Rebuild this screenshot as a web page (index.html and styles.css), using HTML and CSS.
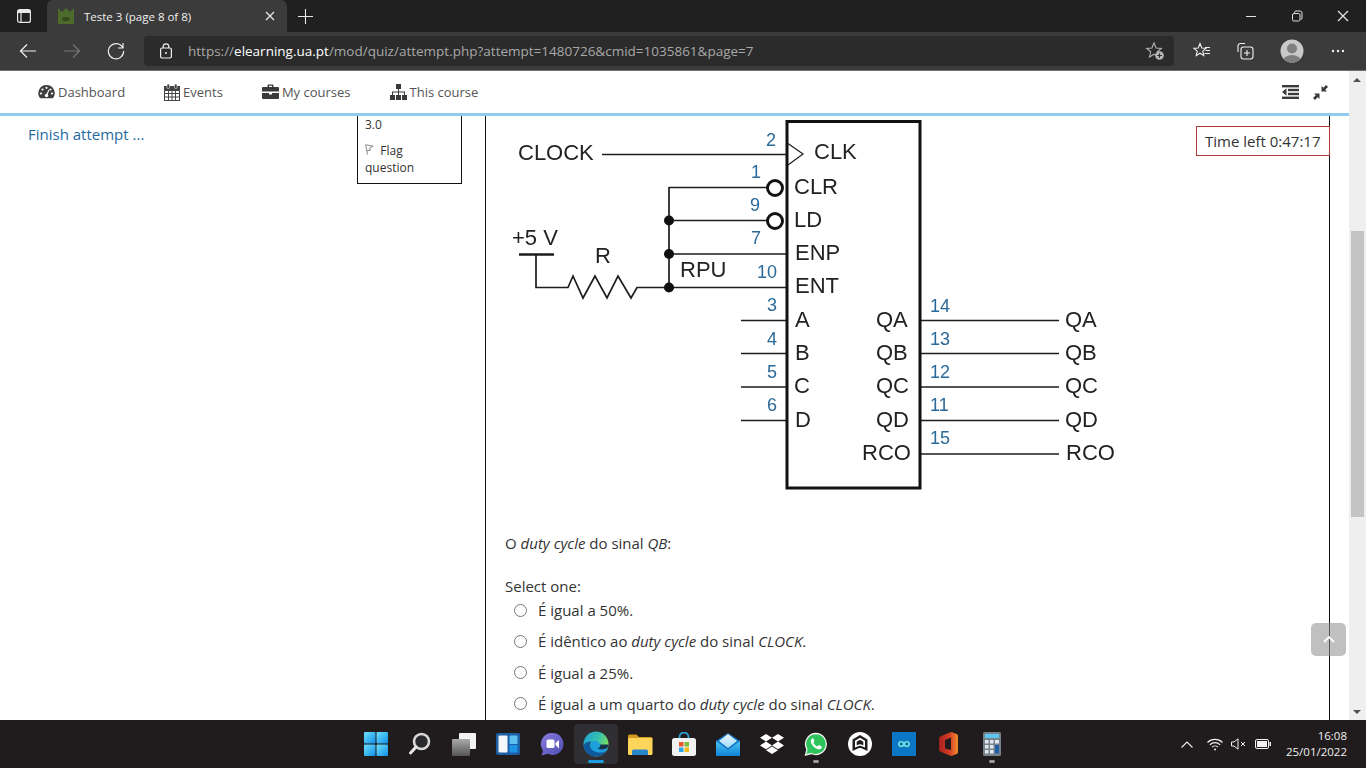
FILE: index.html
```html
<!DOCTYPE html>
<html lang="en">
<head>
<meta charset="utf-8">
<title>Teste 3 (page 8 of 8)</title>
<link rel="stylesheet" href="styles.css">
</head>
<body>
<div class="browser">
  <div class="tabstrip">
    <div class="tabside"><svg width="16" height="16" viewBox="0 0 16 16" fill="none" stroke="#e8e8e8" stroke-width="1.2"><rect x="1.6" y="1.6" width="12.8" height="12.8" rx="2"/><path d="M5 1.6v12.8M1.6 4.4h12.8" /><rect x="2" y="2" width="12" height="2.4" fill="#e8e8e8" stroke="none"/></svg></div>
    <div class="tab">
      <svg class="favicon" width="16" height="16" viewBox="0 0 16 16"><path d="M0 0l4 4 4-4 4 4 4-4v16H0z" fill="#4d6b2a"/><ellipse cx="8" cy="11" rx="4" ry="2" fill="#37491f"/></svg>
      <span class="tabtitle">Teste 3 (page 8 of 8)</span>
      <svg width="10" height="10" viewBox="0 0 10 10" stroke="#e8e8e8" stroke-width="1.3"><path d="M1 1l8 8M9 1l-8 8"/></svg>
    </div>
    <div class="newtab"><svg width="15" height="15" viewBox="0 0 15 15" stroke="#e8e8e8" stroke-width="1.1"><path d="M7.5 0v15M0 7.5h15"/></svg></div>
    <div class="winbtns">
      <svg width="46" height="32" viewBox="0 0 46 32" stroke="#e0e0e0" stroke-width="1"><path d="M18 16.5h10"/></svg>
      <svg width="46" height="32" viewBox="0 0 46 32" fill="none" stroke="#e0e0e0" stroke-width="1"><rect x="18.5" y="13.5" width="7.5" height="7.5" rx="1.5"/><path d="M20.5 13v-.5a1.5 1.5 0 0 1 1.5-1.5h4a2 2 0 0 1 2 2v5a1.5 1.5 0 0 1-1.5 1.5"/></svg>
      <svg width="46" height="32" viewBox="0 0 46 32" stroke="#e8e8e8" stroke-width="1.2"><path d="M18 11l10 10M28 11l-10 10"/></svg>
    </div>
  </div>
  <div class="toolbar">
    <div class="navbtn"><svg width="18" height="16" viewBox="0 0 18 16" fill="none" stroke="#f0f0f0" stroke-width="1.2"><path d="M17 8H1.5M8 1.5L1.5 8 8 14.5"/></svg></div>
    <div class="navbtn"><svg width="18" height="16" viewBox="0 0 18 16" fill="none" stroke="#777" stroke-width="1.2"><path d="M1 8h15.5M10 1.5L16.5 8 10 14.5"/></svg></div>
    <div class="navbtn"><svg width="18" height="18" viewBox="0 0 18 18" fill="none" stroke="#f0f0f0" stroke-width="1.2"><path d="M15.6 5.5A7.6 7.6 0 1 0 16.6 9M16 1v5h-5"/></svg></div>
    <div class="addressbar">
      <svg width="14" height="16" viewBox="0 0 14 16" fill="none" stroke="#f0f0f0" stroke-width="1.2"><rect x="1.6" y="5" width="10.8" height="10" rx="1.5"/><path d="M4.2 5V3.6a2.8 2.8 0 0 1 5.6 0V5"/><circle cx="7" cy="10" r="1" fill="#f0f0f0" stroke="none"/></svg>
      <span class="url"><span class="urlmute">https://</span><b class="urlhost">elearning.ua.pt</b><span class="urlmute">/mod/quiz/attempt.php?attempt=1480726&amp;cmid=1035861&amp;page=7</span></span>
      <svg class="addfav" width="20" height="20" viewBox="0 0 20 20"><path d="M9 2l2.1 5 5.2.4-4 3.4 1.2 5.2L9 13.2 4.500 16l1.200-5.200-4-3.400 5.200-.4z" fill="none" stroke="#b0b0b0" stroke-width="1.1"/><circle cx="14.500" cy="14.500" r="4.300" fill="#b8b8b8"/><path d="M14.500 12.200v4.600M12.200 14.500h4.600" stroke="#2b2b2b" stroke-width="1.100"/></svg>
    </div>
    <div class="tools">
      <svg width="18" height="18" viewBox="0 0 18 18" fill="none" stroke="#f0f0f0" stroke-width="1.100"><path d="M7 1.500l1.800 4.500 4.200.3-3.200 2.800 1 4.400L7 11.200l-3.800 2.300 1-4.400L1 6.300l4.200-.3z"/><path d="M12 5.500h5M12.500 8.500h4.500M11.500 11.500h5.500"/></svg>
      <svg width="18" height="18" viewBox="0 0 18 18" fill="none" stroke="#f0f0f0" stroke-width="1.100"><path d="M2 10V4a2.500 2.500 0 0 1 2.500-2.500H9"/><rect x="5" y="5" width="12" height="12" rx="2.500"/><path d="M11 8v6M8 11h6"/></svg>
      <svg class="avatar" width="24" height="24" viewBox="0 0 24 24"><defs><clipPath id="av"><circle cx="12" cy="12" r="11.500"/></clipPath></defs><circle cx="12" cy="12" r="11.500" fill="#c9c9c9"/><g clip-path="url(#av)" fill="#7f7f7f"><circle cx="12" cy="9.500" r="5"/><ellipse cx="12" cy="22" rx="9" ry="6"/></g></svg>
      <svg width="14" height="4" viewBox="0 0 14 4" fill="#f0f0f0"><circle cx="2" cy="2" r="1.200"/><circle cx="7" cy="2" r="1.200"/><circle cx="12" cy="2" r="1.200"/></svg>
    </div>
  </div>
  <div class="viewport">
    <div class="page">
      <nav class="sitenav">
        <a class="navitem"><svg width="17" height="16" viewBox="0 0 17 16" fill="#3f3f3f"><path d="M8.500 1a8.200 8.200 0 0 0-7 12.500c.3.500.8.700 1.300.7h11.400c.5 0 1-.2 1.300-.7A8.200 8.200 0 0 0 8.500 1z"/><g fill="#fff"><circle cx="8.500" cy="3.800" r="1.100"/><circle cx="4.500" cy="5.500" r="1.100"/><circle cx="12.500" cy="5.500" r="1.100"/><circle cx="3" cy="9.500" r="1.100"/><circle cx="14" cy="9.500" r="1.100"/><circle cx="8.500" cy="11.500" r="1.700"/><path d="M8 11l2.600-5.500.8.400L9.200 11.600z"/></g></svg><span>Dashboard</span></a>
        <a class="navitem"><svg width="16" height="17" viewBox="0 0 16 17" fill="none" stroke="#444" stroke-width="1"><rect x=".5" y="2.500" width="15" height="14" fill="#fff"/><path d="M.5 6.500h15M.5 9.500h15M.5 13h15M4.500 6.500v10M8 6.500v10M11.500 6.500v10"/><rect x="0" y="2.500" width="16" height="4" fill="#444" stroke="none"/><rect x="3" y="0" width="2.500" height="4.500" rx="1" fill="#444" stroke="#fff" stroke-width=".5"/><rect x="10.500" y="0" width="2.500" height="4.500" rx="1" fill="#444" stroke="#fff" stroke-width=".5"/></svg><span>Events</span></a>
        <a class="navitem"><svg width="17" height="16" viewBox="0 0 17 16" fill="#3a3a3a"><path d="M5.500 3V1.500a1 1 0 0 1 1-1h4a1 1 0 0 1 1 1V3H16a1 1 0 0 1 1 1v3.500H0V4a1 1 0 0 1 1-1zM7 1.800V3h3V1.800z" fill-rule="evenodd"/><path d="M0 9h7v1.500h3V9h7v5a1 1 0 0 1-1 1H1a1 1 0 0 1-1-1z"/></svg><span>My courses</span></a>
        <a class="navitem"><svg width="17" height="16" viewBox="0 0 17 16" fill="#3a3a3a"><rect x="6" y="0" width="5" height="5"/><rect x="0" y="11" width="5" height="5"/><rect x="6" y="11" width="5" height="5"/><rect x="12" y="11" width="5" height="5"/><path d="M8 5h1v2.500h6V11h-1V8.500H9V11H8V8.500H3V11H2V7.500h6z"/></svg><span>This course</span></a>
        <div class="navright">
          <svg width="17" height="14" viewBox="0 0 17 14" fill="#3a3a3a"><rect x="0" y="0" width="17" height="2.400"/><rect x="6" y="3.800" width="11" height="2.400"/><rect x="6" y="7.800" width="11" height="2.400"/><rect x="0" y="11.600" width="17" height="2.400"/><path d="M4.500 3.200v7.600L0 7z"/></svg>
          <svg width="15" height="15" viewBox="0 0 15 15" fill="#3a3a3a"><path d="M8.500 6.500V1l1.800 1.800L13 0l2 2-2.800 2.700L14 6.500zM6.500 8.500V14l-1.800-1.800L2 15l-2-2 2.800-2.700L1 8.500z"/></svg>
        </div>
      </nav>
      <div class="content">
        <aside class="sidebar"><a class="finish">Finish attempt ...</a></aside>
        <div class="qinfo">
          <div class="grade">3.0</div>
          <div class="flag"><svg width="9" height="11" viewBox="0 0 9 11" fill="none" stroke="#888" stroke-width="1"><path d="M2.500 10.500L.7.800l7.500 1.300-3.500 2 .6 2.200-3.200.3"/></svg>&nbsp; Flag<br>question</div>
        </div>
        <main class="question">
          <svg class="diagram" width="640" height="390" viewBox="505 116 640 390">
            <g fill="none" stroke="#1d1d1d" stroke-width="1.700">
              <path d="M602 154.500H787M669 187.500H768M669 220.500H768M669 254H787M669 287.500H787M669 187V288"/>
              <path d="M519 254.500H554" stroke-width="2.500"/>
              <path d="M536 254V287.500H568L573 276 583 298 595 276 607 298 618 276 631 298 637 287.500H669"/>
              <path d="M741 320.500H787M741 353.500H787M741 387H787M741 420.500H787M920 320.500H1059M920 353.500H1059M920 387H1059M920 420.500H1059M920 454H1059"/>
              <rect x="787" y="121.500" width="133" height="366.500" stroke="#111" stroke-width="3"/>
              <path d="M788 143.500L803 154 788 165" stroke-width="1.200"/>
              <circle cx="775" cy="188" r="7.500" stroke="#111" stroke-width="2.900" fill="#fff"/>
              <circle cx="775" cy="221" r="7.500" stroke="#111" stroke-width="2.900" fill="#fff"/>
            </g>
            <g fill="#111"><circle cx="669" cy="220.500" r="5"/><circle cx="669" cy="254" r="5"/><circle cx="669" cy="287.500" r="5"/></g>
            <g class="dlabel">
              <text x="518" y="160">CLOCK</text><text x="512" y="245">+5 V</text><text x="595" y="263">R</text><text x="680" y="277">RPU</text>
              <text x="814" y="158.500">CLK</text><text x="794" y="193.500">CLR</text><text x="794" y="226.500">LD</text><text x="795" y="259.500">ENP</text><text x="795" y="293">ENT</text>
              <text x="795" y="326.500">A</text><text x="795" y="359.500">B</text><text x="794" y="393">C</text><text x="795" y="426.500">D</text>
              <text x="876" y="326.500">QA</text><text x="876" y="359.500">QB</text><text x="876" y="393">QC</text><text x="876" y="426.500">QD</text><text x="862" y="459.500">RCO</text>
              <text x="1065" y="326.500">QA</text><text x="1065" y="359.500">QB</text><text x="1065" y="393">QC</text><text x="1065" y="426.500">QD</text><text x="1066" y="459.500">RCO</text>
            </g>
            <g class="dnum">
              <text x="766" y="146">2</text><text x="751" y="178">1</text><text x="750" y="211">9</text><text x="751" y="244">7</text><text x="757" y="278">10</text>
              <text x="767" y="311">3</text><text x="767" y="345">4</text><text x="767" y="378">5</text><text x="767" y="411">6</text>
              <text x="930" y="312">14</text><text x="930" y="345">13</text><text x="930" y="378">12</text><text x="930" y="411">11</text><text x="930" y="444">15</text>
            </g>
          </svg>
          <p class="qtext">O <i>duty cycle</i> do sinal <i>QB</i>:</p>
          <p class="prompt">Select one:</p>
          <div class="answers">
            <label class="answer"><span class="radio"></span><span>É igual a 50%.</span></label>
            <label class="answer"><span class="radio"></span><span>É idêntico ao <i>duty cycle</i> do sinal <i>CLOCK</i>.</span></label>
            <label class="answer"><span class="radio"></span><span>É igual a 25%.</span></label>
            <label class="answer"><span class="radio"></span><span>É igual a um quarto do <i>duty cycle</i> do sinal <i>CLOCK</i>.</span></label>
          </div>
        </main>
      </div>
      <div class="timer">Time left 0:47:17</div>
      <div class="totop"><svg width="12" height="7" viewBox="0 0 12 7" fill="none" stroke="#fff" stroke-width="1.800"><path d="M1 6l5-5 5 5"/></svg></div>
    </div>
    <div class="scrollbar">
      <div class="arrow-up"></div>
      <div class="thumb"></div>
      <div class="arrow-down"></div>
    </div>
  </div>
  <footer class="taskbar">
    <div class="slot"><svg width="24" height="24" viewBox="0 0 24 24"><defs><linearGradient id="wg" x1="0" y1="0" x2="1" y2="1"><stop offset="0" stop-color="#6fe0fb"/><stop offset="1" stop-color="#0f8fe8"/></linearGradient></defs><g fill="url(#wg)"><rect x="0" y="0" width="11.500" height="11.500" rx="1"/><rect x="12.500" y="0" width="11.500" height="11.500" rx="1"/><rect x="0" y="12.500" width="11.500" height="11.500" rx="1"/><rect x="12.500" y="12.500" width="11.500" height="11.500" rx="1"/></g></svg></div>
    <div class="slot"><svg width="24" height="24" viewBox="0 0 24 24" fill="none"><circle cx="13.500" cy="9.500" r="7.500" stroke="#d8d8d8" stroke-width="2.600" fill="#2a2a2c"/><path d="M8 15l-5.500 6" stroke="#e8e8e8" stroke-width="3" stroke-linecap="round"/></svg></div>
    <div class="slot"><svg width="24" height="24" viewBox="0 0 24 24"><defs><linearGradient id="tv" x1="0" y1="0" x2="0" y2="1"><stop offset="0" stop-color="#aaa"/><stop offset="1" stop-color="#555"/></linearGradient></defs><rect x="7" y="1" width="17" height="16" rx="1" fill="#f2f2f2"/><rect x="0" y="7" width="18" height="17" rx="1" fill="url(#tv)"/></svg></div>
    <div class="slot"><svg width="24" height="22" viewBox="0 0 24 22"><rect width="24" height="22" rx="2" fill="#1d5fa6"/><rect x="2.500" y="2.500" width="9" height="17" rx="1" fill="#f4f8fc"/><rect x="13.500" y="2.500" width="8" height="8.500" rx="1" fill="#5ec1f2"/><rect x="13.500" y="12" width="8" height="7.500" rx="1" fill="#1f94e6"/></svg></div>
    <div class="slot"><svg width="24" height="24" viewBox="0 0 24 24"><defs><linearGradient id="ch" x1="0" y1="0" x2="1" y2="1"><stop offset="0" stop-color="#8a7be0"/><stop offset="1" stop-color="#4d4fb0"/></linearGradient></defs><path d="M12.500 1a11 11 0 1 1-5 20.800L1.500 23.500 3 18.500A11 11 0 0 1 12.500 1z" fill="url(#ch)"/><rect x="6.500" y="7.500" width="8" height="8.500" rx="1.500" fill="#fff"/><path d="M15.500 11l3.500-3v8.500L15.500 13z" fill="#fff"/></svg></div>
    <div class="slot active"><svg width="26" height="26" viewBox="0 0 26 26"><defs><linearGradient id="eg" x1="0" y1="0" x2="1" y2=".4"><stop offset="0" stop-color="#1f9ed8"/><stop offset=".6" stop-color="#35c1b0"/><stop offset="1" stop-color="#7bdc62"/></linearGradient></defs><circle cx="13" cy="13" r="12.500" fill="url(#eg)"/><path d="M13 13.500h12.400c-.3 3-1.700 5.600-3.900 7.500H11z" fill="#14324a"/><path d="M17 13.500c1 1.800-.4 3.500-2.500 3.700 3 2 7 1.600 10.300-.6l-1 2.900c-3 3-9 3.500-13 1-4-2.500-4.300-7.500-1-10 2-1.500 6-1 7.200 3z" fill="#1c9fdc"/><path d="M.5 14.500C1 21 6.500 25.500 13 25.500c4.500 0 8.300-2.300 10.600-5.800-3.500 2.300-9 2.500-12.600.5-4-2.300-5-6.800-2.500-9.800C5 10.500 1.500 11.500.5 14.500z" fill="#11599f"/></svg><i class="dot blue"></i></div>
    <div class="slot"><svg width="26" height="24" viewBox="0 0 26 24"><path d="M1 4a1.500 1.500 0 0 1 1.500-1.500h7L12 5h12a1.500 1.500 0 0 1 1.500 1.500V8H1z" fill="#d59a1d"/><rect x="1" y="6" width="24.500" height="17" rx="1.500" fill="#fdd55a"/><path d="M5 23v-4a1.500 1.500 0 0 1 1.500-1.500h13A1.500 1.500 0 0 1 21 19v4z" fill="#2b86c9"/></svg></div>
    <div class="slot"><svg width="24" height="24" viewBox="0 0 24 24"><path d="M7.500 7V5a4.500 4.500 0 0 1 9 0v2" fill="none" stroke="#2aa3d8" stroke-width="1.800"/><rect x="0" y="6" width="24" height="18" rx="2.500" fill="#f2f2f2"/><rect x="7" y="10" width="4.500" height="4.500" fill="#e8552f"/><rect x="12.500" y="10" width="4.500" height="4.500" fill="#7dbb3a"/><rect x="7" y="15.500" width="4.500" height="4.500" fill="#2aa3e8"/><rect x="12.500" y="15.500" width="4.500" height="4.500" fill="#f7b819"/></svg></div>
    <div class="slot"><svg width="24" height="23" viewBox="0 0 24 23"><defs><linearGradient id="ml" x1="0" y1="0" x2="0" y2="1"><stop offset="0" stop-color="#4cc3f3"/><stop offset="1" stop-color="#0e84d6"/></linearGradient><linearGradient id="mf" x1="0" y1="0" x2="0" y2="1"><stop offset="0" stop-color="#e9f6fd"/><stop offset="1" stop-color="#9fdcf8"/></linearGradient></defs><path d="M12 0l12 8v15H0V8z" fill="#1577c8"/><path d="M3 8l9-7 9 7-9 7z" fill="url(#mf)"/><path d="M0 8l12 9 12-9v15H0z" fill="url(#ml)"/></svg></div>
    <div class="slot"><svg width="24" height="20" viewBox="0 0 24 20" fill="#fff"><path d="M6 0l6 3.800L6 7.600 0 3.800zM18 0l6 3.800-6 3.800-6-3.800zM0 11.400l6-3.800 6 3.800-6 3.800zM18 7.600l6 3.800-6 3.800-6-3.800zM6 16.200l6-3.800 6 3.800-6 3.800z"/></svg></div>
    <div class="slot"><svg width="24" height="24" viewBox="0 0 24 24"><path d="M12 1.500A10.500 10.500 0 0 0 3 17.300L1.500 23l5.800-1.500A10.500 10.500 0 1 0 12 1.500z" fill="#2fc35b" stroke="#f2f2f2" stroke-width="1.300"/><path d="M8.500 6.500c-1 .3-2 1.700-1.600 3.500.6 3 4 6.700 7.500 7.300 1.800.3 3-.6 3.400-1.800.2-.6-.1-1-.5-1.200l-2-1c-.4-.2-.8-.1-1 .2l-.8 1c-2-.7-3.400-2.200-4.200-4l.8-1c.2-.3.3-.6.100-1l-.8-1.900c-.2-.4-.4-.6-.9-.4z" fill="#fff"/></svg><i class="dot"></i></div>
    <div class="slot"><svg width="24" height="24" viewBox="0 0 24 24"><circle cx="12" cy="12" r="12" fill="#fff"/><path d="M12 3l7.500 4.500V19L13 16h-2l-6.500 3V7.500z" fill="#201c1e"/><path d="M12 5.800l5 3v6.700l-4.500-1.800h-1L7 15.500V8.800z" fill="#fff"/><path d="M12 7.800l3.300 2v3.500l-2.800-1h-1l-2.800 1V9.800z" fill="#201c1e"/></svg></div>
    <div class="slot"><svg width="24" height="24" viewBox="0 0 24 24"><rect width="24" height="24" fill="#0a76c4"/><g fill="none" stroke="#7fe6dc" stroke-width="1.400"><circle cx="9.200" cy="12" r="2.400"/><circle cx="14.800" cy="12" r="2.400"/></g></svg></div>
    <div class="slot"><svg width="19" height="24" viewBox="0 0 19 24"><defs><linearGradient id="of" x1="0" y1="0" x2="1" y2="0"><stop offset="0" stop-color="#a5201f"/><stop offset=".55" stop-color="#d63e25"/><stop offset="1" stop-color="#f08a2e"/></linearGradient></defs><path d="M0 7c0-1.500.8-2.500 2-3L11 .5c1-.4 2-.4 3 0l3.500 1.500c1 .4 1.500 1.200 1.500 2.300v15.400c0 1-.5 1.900-1.500 2.300L14 23.500c-1 .4-2 .4-3 0L2 20c-1.200-.5-2-1.500-2-3z" fill="url(#of)"/><path d="M6 8l6-2.500V18l-6-1.500z" fill="#201c1e"/></svg></div>
    <div class="slot"><svg width="18" height="24" viewBox="0 0 18 24"><rect width="18" height="24" rx="1.500" fill="#77828c"/><rect x="2" y="2" width="14" height="4" fill="#5cc8ee"/><g fill="#e4e8ec"><rect x="2" y="8" width="3.500" height="3.500"/><rect x="7" y="8" width="3.500" height="3.500"/><rect x="12" y="8" width="4" height="3.500"/><rect x="2" y="13" width="3.500" height="3.500"/><rect x="7" y="13" width="3.500" height="3.500"/><rect x="2" y="18" width="3.500" height="3.500"/><rect x="7" y="18" width="3.500" height="3.500"/></g><rect x="12" y="13" width="4" height="8.500" fill="#1d5fa6"/></svg><i class="dot"></i></div>
    <div class="tray">
      <svg width="12" height="7" viewBox="0 0 12 7" fill="none" stroke="#f0f0f0" stroke-width="1.100"><path d="M.5 6.500L6 1l5.500 5.500"/></svg>
      <svg class="tray-wifi" width="16" height="13" viewBox="0 0 16 13" fill="none" stroke="#f0f0f0" stroke-width="1.100"><path d="M.5 4.500a10.500 10.500 0 0 1 15 0M2.800 6.800a7.300 7.300 0 0 1 10.400 0M5.200 9.100a4 4 0 0 1 5.600 0"/><circle cx="8" cy="11.500" r="1" fill="#f0f0f0" stroke="none"/></svg>
      <svg class="tray-vol" width="15" height="12" viewBox="0 0 15 12" fill="none" stroke="#f0f0f0" stroke-width="1"><path d="M.5 4h2.500L7 .8v10.400L3 8H.5zM10 4l4 4M14 4l-4 4"/></svg>
      <svg class="tray-bat" width="16" height="10" viewBox="0 0 16 10"><rect x=".5" y=".5" width="13" height="9" rx="1.500" fill="none" stroke="#f0f0f0"/><rect x="2" y="2" width="10" height="6" fill="#f0f0f0"/><rect x="14.500" y="3" width="1.500" height="4" fill="#f0f0f0"/></svg>
      <div class="clock"><div>16:08</div><div>25/01/2022</div></div>
    </div>
  </footer>
</div>
</body>
</html>
```
FILE: styles.css
```css
* { box-sizing: border-box; }
html, body { margin: 0; padding: 0; height: 100%; overflow: hidden; }
body { font-family: "Open Sans", "Noto Sans", sans-serif; color: #222; }
.browser { display: flex; flex-direction: column; width: 1366px; height: 768px; }

.tabstrip { display: flex; align-items: stretch; height: 32px; background: #202020; flex: none; }
.tabside { width: 47px; display: flex; align-items: center; justify-content: center; }
.tab { width: 240px; background: #3b3b3b; border-radius: 6px 6px 0 0; display: flex; align-items: center; padding: 0 12px 0 11px; }
.favicon { margin-right: 10px; flex: none; }
.tabtitle { flex: 1; color: #f0f0f0; font-size: 11.5px; }
.newtab { width: 36px; display: flex; align-items: center; justify-content: center; }
.winbtns { margin-left: auto; display: flex; }

.toolbar { height: 39px; background: #3b3b3b; border-bottom: 1px solid #707070; display: flex; align-items: center; padding-left: 6px; flex: none; }
.navbtn { width: 44px; display: flex; justify-content: center; }
.addressbar { margin-left: 6px; width: 1030px; height: 30px; background: #2b2b2b; border-radius: 4px; display: flex; align-items: center; padding-left: 15px; }
.url { margin-left: 15px; font-size: 13.5px; white-space: nowrap; }
.urlmute { color: #a8a8a8; }
.urlhost { color: #fff; font-weight: 500; }
.addfav { margin-left: auto; margin-right: 9px; }
.tools { display: flex; align-items: center; flex: 1; padding-left: 19px; gap: 25px; }
.tools .avatar { margin-left: 1px; margin-right: 2px; }

.viewport { display: flex; height: 649px; flex: none; background: #fff; }
.page { position: relative; width: 1349px; display: flex; flex-direction: column; overflow: hidden; }
.sitenav { height: 45px; border-bottom: 3px solid #8fcdf0; display: flex; align-items: center; padding-left: 38px; gap: 39px; flex: none; }
.navitem { display: flex; align-items: center; gap: 3px; color: #555; font-size: 13px; }
.navright { margin-left: auto; display: flex; align-items: center; gap: 14px; padding-right: 21px; }

.content { flex: 1; display: grid; grid-template-columns: 357px 105px 844px; min-height: 0; }
.sidebar { padding: 7px 0 0 28px; }
.finish { color: #1f6a9e; font-size: 15px; line-height: 21px; }
.qinfo { align-self: start; height: 68px; border: 1px solid #111; border-top: 0; padding: 0 7px; font-size: 12px; color: #333; }
.grade { line-height: 17px; }
.flag { margin-top: 9px; line-height: 17px; }
.question { margin-left: 23px; width: 845px; border-left: 1px solid #111; border-right: 1px solid #111; padding-left: 19px; overflow: hidden; font-size: 15px; color: #333; }
.diagram { display: block; filter: blur(.3px); }
.dlabel text { font-family: "Liberation Sans", Arial, sans-serif; font-size: 22px; fill: #222; }
.dnum text { font-family: "Liberation Sans", Arial, sans-serif; font-size: 18px; fill: #2a6a9a; }
.qtext { margin: 27px 0 0; line-height: 20px; }
.prompt { margin: 23px 0 0; line-height: 20px; }
.answers { display: flex; flex-direction: column; gap: 11.3px; margin-top: 4px; }
.answer { display: flex; align-items: center; line-height: 20px; padding-left: 9px; }
.radio { width: 13px; height: 13px; border: 1px solid #777; border-radius: 50%; margin-right: 11px; flex: none; }

.timer { position: absolute; left: 1196px; top: 55px; height: 30px; border: 1px solid #b03a3a; background: #fff; font-size: 15px; line-height: 28px; padding: 0 8px; width: 134px; color: #333; white-space: nowrap; }
.totop { position: absolute; left: 1311px; top: 552px; width: 35px; height: 33px; border-radius: 5px; background: rgba(140,140,140,.55); display: flex; align-items: center; justify-content: center; }

.scrollbar { position: relative; width: 17px; background: #efefef; flex: none; }
.arrow-up { position: absolute; left: 4px; top: 7px; border: 4px solid transparent; border-top: 0; border-bottom: 4px solid #505050; }
.arrow-down { position: absolute; left: 4px; bottom: 6px; border: 4px solid transparent; border-bottom: 0; border-top: 4px solid #505050; }
.thumb { position: absolute; left: 2px; top: 160px; width: 13px; height: 286px; background: #c4c4c4; }

.taskbar { height: 48px; background: #201c1e; display: flex; align-items: center; padding-left: 354px; flex: none; }
.slot { position: relative; width: 44px; height: 40px; display: flex; align-items: center; justify-content: center; border-radius: 4px; }
.slot.active { background: #2e2e33; }
.dot { position: absolute; left: 19px; bottom: 1px; width: 6px; height: 3px; border-radius: 2px; background: #9a9a9a; }
.dot.blue { left: 14px; width: 16px; background: #1c9be0; }
.tray { margin-left: auto; display: flex; align-items: center; padding-right: 19px; color: #f0f0f0; }
.tray-wifi { margin-left: 14px; }
.tray-vol { margin-left: 8px; }
.tray-bat { margin-left: 9px; }
.clock { margin-left: 15px; font-size: 11.5px; line-height: 16px; text-align: right; }
```
